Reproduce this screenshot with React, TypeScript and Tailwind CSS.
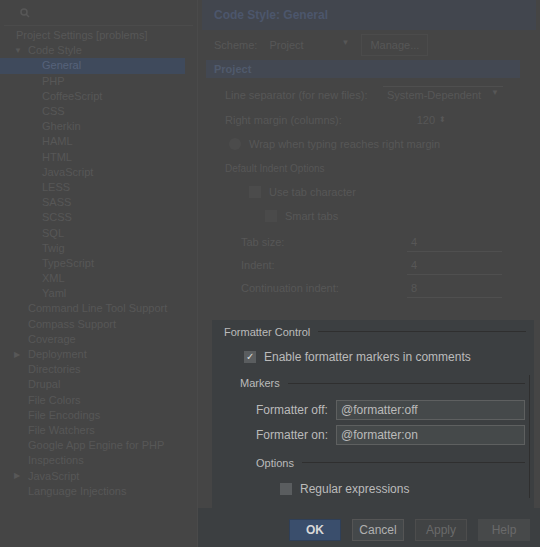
const F = { fontFamily: '"Liberation Sans", Arial, sans-serif' }

const tree: [string, number, boolean?][] = [
  ["Project Settings [problems]", 0],
  ["Code Style", 1, true],
  ["General", 2],
  ["PHP", 2], ["CoffeeScript", 2], ["CSS", 2], ["Gherkin", 2], ["HAML", 2], ["HTML", 2],
  ["JavaScript", 2], ["LESS", 2], ["SASS", 2], ["SCSS", 2], ["SQL", 2], ["Twig", 2],
  ["TypeScript", 2], ["XML", 2], ["Yaml", 2],
  ["Command Line Tool Support", 1], ["Compass Support", 1], ["Coverage", 1],
  ["Deployment", 1, false], ["Directories", 1], ["Drupal", 1], ["File Colors", 1],
  ["File Encodings", 1], ["File Watchers", 1], ["Google App Engine for PHP", 1],
  ["Inspections", 1], ["JavaScript", 1, false], ["Language Injections", 1],
]

function Box({ w, v }: { w: string; v: string }) {
  return <div className={`${w} h-[19px] border-b border-[#4f4f4f] text-[#575757] text-[11px] px-1 leading-[19px]`}>{v}</div>
}

export default function App() {
  return (
    <div style={F} className="w-[540px] h-[547px] bg-[#454545] flex text-[11px] overflow-hidden whitespace-nowrap">
      {/* sidebar */}
      <div className="w-[198px] shrink-0 flex flex-col border-r border-[#4a4a4a]">
        <div className="h-[26px] flex items-center px-4 border-b border-[#4b4b4b] mx-1">
          <svg width="10" height="10" viewBox="0 0 10 10" fill="none" stroke="#575757" strokeWidth="1.5"><circle cx="4" cy="4" r="3" /><path d="M6 6l3 3" /></svg>
        </div>
        <div className="pt-[2px]">
          {tree.map(([t, lvl, open], i) => (
            <div key={i} className={`h-[15.2px] flex items-center text-[11px] leading-none ${i === 2 ? "bg-[#3f4a5c] mr-3 text-[#56627a]" : "text-[#575757]"}`}
              style={{ paddingLeft: lvl === 0 ? 16 : lvl === 1 ? 28 : 42 }}>
              {open !== undefined && <span className="-ml-[14px] w-[14px] text-[8px]">{open ? "▼" : "▶"}</span>}
              {t}
            </div>
          ))}
        </div>
      </div>

      {/* main */}
      <div className="flex-1 flex flex-col text-[#575757]">
        <div className="h-[30px] mx-1 bg-[#42464e] flex items-center px-3 text-[12px] font-bold text-[#4c566c]">Code Style: General</div>
        <div className="flex items-center gap-3 px-4 h-[30px]">
          <span>Scheme:</span>
          <span className="w-[80px] flex justify-between">Project <span className="text-[8px]">▼</span></span>
          <span className="border border-[#4b4b4b] px-2 py-[2px]">Manage...</span>
        </div>
        <div className="ml-[8px] mr-[20px] h-[18px] bg-[#434852] flex items-center px-2 font-bold text-[#505a6c]">Project</div>
        <div className="px-[27px] pt-2 flex flex-col gap-[8px]">
          <div className="flex items-center justify-between pr-[10px]">
            <span>Line separator (for new files):</span>
            <span className="border-t border-[#4f4f4f] w-[120px] flex justify-between px-1">System-Dependent <span className="text-[8px]">▼</span></span>
          </div>
          <div className="flex items-center">
            <span className="w-[170px]">Right margin (columns):</span>
            <span className="w-[40px] text-right">120</span><span className="ml-1 text-[8px]">⬍</span>
          </div>
          <div className="flex items-center gap-2 pl-1"><span className="w-3 h-3 rounded-full bg-[#4b4b4b]" />Wrap when typing reaches right margin</div>
          <div className="text-[10px]">Default Indent Options</div>
          <div className="flex items-center gap-2 pl-6"><span className="w-3 h-3 bg-[#4b4b4b]" />Use tab character</div>
          <div className="flex items-center gap-2 pl-10"><span className="w-3 h-3 bg-[#4a4a4a]" />Smart tabs</div>
          <div className="flex flex-col gap-[4px] pl-4">
            {[["Tab size:", "4"], ["Indent:", "4"], ["Continuation indent:", "8"]].map(([l, v]) => (
              <div key={l} className="flex items-center">
                <span className="w-[166px]">{l}</span><Box w="w-[95px]" v={v} />
              </div>
            ))}
          </div>
        </div>

        {/* formatter control */}
        <div className="mt-[22px] bg-[#3c3f41] ml-[14px] mr-[6px] pl-[12px] pr-[8px] pt-[4px] pb-[10px] text-[#bbbbbb] text-[12px]">
          <div className="flex items-center gap-2 text-[11px]">Formatter Control<span className="flex-1 h-px bg-[#2f2f2f]" /></div>
          <div className="flex items-center gap-2 pl-5 mt-[8px]">
            <span className="w-3 h-3 bg-[#5a5d5f] flex items-center justify-center text-[10px] leading-none text-[#dddddd]">✓</span>
            Enable formatter markers in comments
          </div>
          <div className="pl-[16px] mt-[9px] border-r border-[#2f2f2f] mr-[-4px] pr-[4px]">
            <div className="flex items-center gap-2 text-[11px]">Markers<span className="flex-1 h-px bg-[#2f2f2f]" /></div>
            <div className="pl-[16px] mt-[8px] flex flex-col gap-[5px]">
              {[["Formatter off:", "@formatter:off"], ["Formatter on:", "@formatter:on"]].map(([l, v]) => (
                <div key={l} className="flex items-center">
                  <span className="w-[80px]">{l}</span>
                  <span className="flex-1 h-[20px] border border-[#5e6060] bg-[#45494a] px-[4px] leading-[18px]">{v}</span>
                </div>
              ))}
              <div className="flex items-center gap-2 text-[11px] mt-[5px]">Options<span className="flex-1 h-px bg-[#2f2f2f]" /></div>
              <div className="flex items-center gap-2 pl-6 mt-[4px]"><span className="w-3 h-3 bg-[#5a5d5f]" />Regular expressions</div>
            </div>
          </div>
        </div>

        <div className="flex-1 bg-[#3c3f41] flex items-end justify-end gap-[11px] pr-[10px] pb-[6px]">
          <span className="w-[52px] h-[22px] bg-[#3a4e6c] text-[#d8d8d8] font-bold text-[12px] flex items-center justify-center border border-[#2f3f57]">OK</span>
          <span className="w-[52px] h-[22px] bg-[#44484a] border border-[#555] text-[#b0b0b0] text-[12px] flex items-center justify-center">Cancel</span>
          <span className="w-[52px] h-[22px] bg-[#414344] border border-[#4d4d4d] text-[#6a6a6a] text-[12px] flex items-center justify-center">Apply</span>
          <span className="w-[52px] h-[22px] bg-[#47494a] text-[#6a6a6a] text-[12px] flex items-center justify-center">Help</span>
        </div>
      </div>
    </div>
  )
}
